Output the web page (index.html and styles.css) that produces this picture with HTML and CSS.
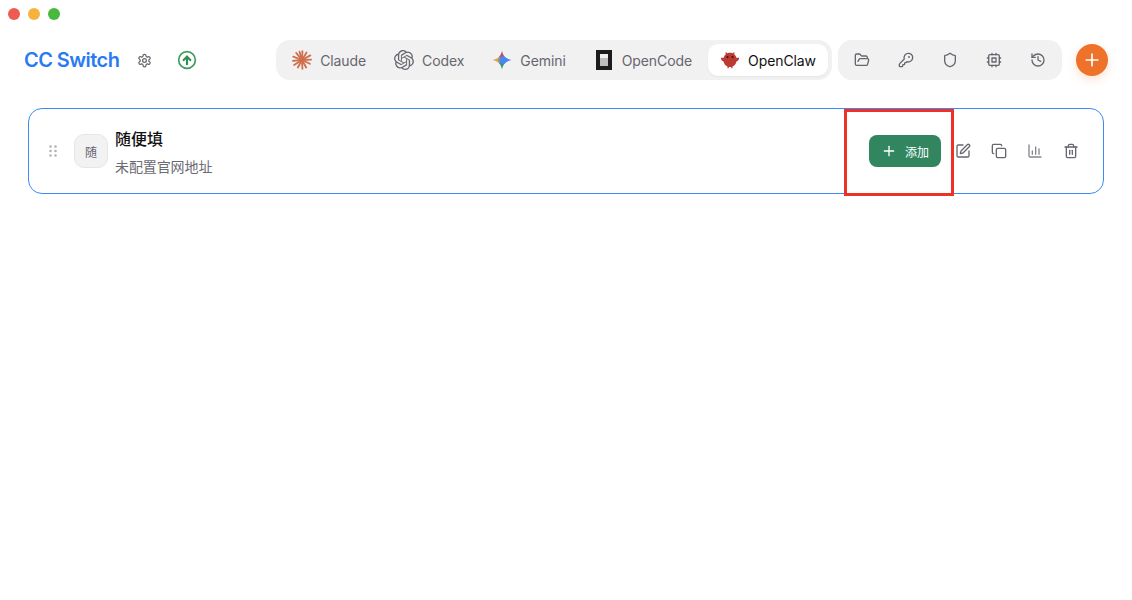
FILE: index.html
```html
<!DOCTYPE html>
<html lang="zh-CN">
<head>
  <meta charset="UTF-8" />
  <meta name="viewport" content="width=device-width, initial-scale=1.0"/>
  <title>CC Switch</title>
  <link rel="stylesheet" href="styles.css">
</head>
<body>
  <div class="titlebar">
    <span class="light red"></span>
    <span class="light yellow"></span>
    <span class="light green"></span>
  </div>

  <header class="topbar">
    <div class="brand">
      <span class="brand-name">CC Switch</span>
      <button class="plain-btn settings-btn" aria-label="settings">
        <svg class="icon" viewBox="0 0 24 24"><path d="M12.22 2h-.44a2 2 0 0 0-2 2v.18a2 2 0 0 1-1 1.73l-.43.25a2 2 0 0 1-2 0l-.15-.08a2 2 0 0 0-2.73.73l-.22.38a2 2 0 0 0 .73 2.73l.15.1a2 2 0 0 1 1 1.72v.51a2 2 0 0 1-1 1.74l-.15.09a2 2 0 0 0-.73 2.73l.22.38a2 2 0 0 0 2.73.73l.15-.08a2 2 0 0 1 2 0l.43.25a2 2 0 0 1 1 1.73V20a2 2 0 0 0 2 2h.44a2 2 0 0 0 2-2v-.18a2 2 0 0 1 1-1.73l.43-.25a2 2 0 0 1 2 0l.15.08a2 2 0 0 0 2.73-.73l.22-.39a2 2 0 0 0-.73-2.73l-.15-.08a2 2 0 0 1-1-1.74v-.5a2 2 0 0 1 1-1.74l.15-.09a2 2 0 0 0 .73-2.73l-.22-.38a2 2 0 0 0-2.73-.73l-.15.08a2 2 0 0 1-2 0l-.43-.25a2 2 0 0 1-1-1.73V4a2 2 0 0 0-2-2z"/><circle cx="12" cy="12" r="3"/></svg>
      </button>
      <button class="plain-btn update-btn" aria-label="update">
        <svg class="icon-update" viewBox="0 0 24 24"><circle cx="12" cy="12" r="10"/><path class="arrow" d="m16 12-4-4-4 4"/><path class="arrow" d="M12 17V8"/></svg>
      </button>
    </div>

    <div class="toolbar">
      <nav class="pill apps">
        <div class="app">
          <svg class="app-icon claude-icon" viewBox="0 0 24 24"><path d="M12 12 12.500 1.500"/><path d="M12 12 17.500 3"/><path d="M12 12 22 6.500"/><path d="M12 12 23 11.500"/><path d="M12 12 21.500 16.500"/><path d="M12 12 17 21"/><path d="M12 12 12.500 22.500"/><path d="M12 12 7 21"/><path d="M12 12 2.500 18"/><path d="M12 12 1 13"/><path d="M12 12 1.500 8"/><path d="M12 12 5 3.500"/><path d="M12 12 9 2"/></svg>
          <span>Claude</span>
        </div>
        <div class="app">
          <svg class="app-icon codex-icon" viewBox="0 0 24 24"><path d="M22.2819 9.8211a5.9847 5.9847 0 0 0-.5157-4.9108 6.0462 6.0462 0 0 0-6.5098-2.9A6.0651 6.0651 0 0 0 4.9807 4.1818a5.9847 5.9847 0 0 0-3.9977 2.9 6.0462 6.0462 0 0 0 .7427 7.0966 5.98 5.98 0 0 0 .511 4.9107 6.051 6.051 0 0 0 6.5146 2.9001A5.9847 5.9847 0 0 0 13.2599 24a6.0557 6.0557 0 0 0 5.7718-4.2058 5.9894 5.9894 0 0 0 3.9977-2.9001 6.0557 6.0557 0 0 0-.7475-7.0729zm-9.022 12.6081a4.4755 4.4755 0 0 1-2.8764-1.0408l.1419-.0804 4.7783-2.7582a.7948.7948 0 0 0 .3927-.6813v-6.7369l2.02 1.1686a.071.071 0 0 1 .038.052v5.5826a4.504 4.504 0 0 1-4.4945 4.4944zm-9.6607-4.1254a4.4708 4.4708 0 0 1-.5346-3.0137l.142.0852 4.783 2.7582a.7712.7712 0 0 0 .7806 0l5.8428-3.3685v2.3324a.0804.0804 0 0 1-.0332.0615L9.74 19.9502a4.4992 4.4992 0 0 1-6.1408-1.6464zM2.3408 7.8956a4.485 4.485 0 0 1 2.3655-1.9728V11.6a.7664.7664 0 0 0 .3879.6765l5.8144 3.3543-2.0201 1.1685a.0757.0757 0 0 1-.071 0l-4.8303-2.7865A4.504 4.504 0 0 1 2.3408 7.872zm16.5963 3.8558L13.1038 8.364 15.1192 7.2a.0757.0757 0 0 1 .071 0l4.8303 2.7913a4.4944 4.4944 0 0 1-.6765 8.1042v-5.6772a.79.79 0 0 0-.407-.667zm2.0107-3.0231l-.142-.0852-4.7735-2.7818a.7759.7759 0 0 0-.7854 0L9.409 9.2297V6.8974a.0662.0662 0 0 1 .0284-.0615l4.8303-2.7866a4.4992 4.4992 0 0 1 6.6802 4.66zM8.3065 12.863l-2.02-1.1638a.0804.0804 0 0 1-.038-.0567V6.0742a4.4992 4.4992 0 0 1 7.3757-3.4537l-.142.0805L8.704 5.459a.7948.7948 0 0 0-.3927.6813zm1.0976-2.3654l2.602-1.4998 2.6069 1.4998v2.9994l-2.5974 1.4997-2.6067-1.4997Z"/></svg>
          <span>Codex</span>
        </div>
        <div class="app">
          <svg class="app-icon" viewBox="0 0 24 24">
            <defs>
              <clipPath id="gemini-star"><path d="M12 0.500C13 7 16.500 10.500 23.500 12 16.500 13.500 13 17 12 23.500 11 17 7.500 13.500 0.500 12 7.500 10.500 11 7 12 0.500Z"/></clipPath>
              <radialGradient id="gemini-core"><stop offset="0.500" stop-color="#4a86f0"/><stop offset="1" stop-color="#4a86f0" stop-opacity="0"/></radialGradient>
            </defs>
            <g clip-path="url(#gemini-star)">
              <path fill="#c9453f" d="M0 0H24L12 12Z"/>
              <path fill="#dda63a" d="M0 0V24L12 12Z"/>
              <path fill="#34945f" d="M0 24H24L12 12Z"/>
              <path fill="#4a86f0" d="M24 0V24L12 12Z"/>
              <circle cx="13.500" cy="12" r="7" fill="url(#gemini-core)"/>
            </g>
          </svg>
          <span>Gemini</span>
        </div>
        <div class="app">
          <svg class="app-icon" viewBox="0 0 20 20"><rect x="2" width="16" height="20" fill="#1c1c1c"/><rect x="6" y="4" width="8" height="12" fill="#f0f0f0"/><rect x="6" y="8" width="8" height="8" fill="#bdbdbd"/></svg>
          <span>OpenCode</span>
        </div>
        <div class="app active">
          <svg class="app-icon" viewBox="0 0 24 24"><path fill="#bd3a33" d="M7 5 6.500 2.500 9 3.800C10.900 3.200 13.100 3.200 15 3.800L17.500 2.500 17 5C18.500 6.200 19.400 7.700 19.700 9.500 20.800 9.300 22 9.600 23 9.300 23 11.500 21.500 13.400 19.700 13.800 19.200 16.800 17.300 19 15 19.800V22H13.500V20.300H10.500V22H9V19.800C6.700 19 4.800 16.800 4.300 13.800 2.500 13.400 1 11.500 1 9.300 2 9.600 3.200 9.300 4.300 9.500 4.600 7.700 5.500 6.200 7 5Z"/><circle cx="9" cy="8.500" r="1.300" fill="#3a1a1a"/><circle cx="15" cy="8.500" r="1.300" fill="#3a1a1a"/></svg>
          <span>OpenClaw</span>
        </div>
      </nav>

      <div class="pill tools">
        <button class="plain-btn tool-btn" aria-label="folder">
          <svg class="icon" viewBox="0 0 24 24"><path d="m6 14 1.500-2.900A2 2 0 0 1 9.240 10H20a2 2 0 0 1 1.940 2.500l-1.540 6a2 2 0 0 1-1.950 1.500H4a2 2 0 0 1-2-2V5a2 2 0 0 1 2-2h3.900a2 2 0 0 1 1.690.9l.81 1.200a2 2 0 0 0 1.670.9H18a2 2 0 0 1 2 2v2"/></svg>
        </button>
        <button class="plain-btn tool-btn" aria-label="key">
          <svg class="icon" viewBox="0 0 24 24"><path d="M2.586 17.414A2 2 0 0 0 2 18.828V21a1 1 0 0 0 1 1h3a1 1 0 0 0 1-1v-1a1 1 0 0 1 1-1h1a1 1 0 0 0 1-1v-1a1 1 0 0 1 1-1h.172a2 2 0 0 0 1.414-.586l.814-.814a6.500 6.500 0 1 0-4-4z"/><circle cx="16.500" cy="7.500" r=".5"/></svg>
        </button>
        <button class="plain-btn tool-btn" aria-label="shield">
          <svg class="icon" viewBox="0 0 24 24"><path d="M20 13c0 5-3.500 7.500-7.660 8.950a1 1 0 0 1-.67-.01C7.500 20.500 4 18 4 13V6a1 1 0 0 1 1-1c2 0 4.500-1.200 6.240-2.720a1.170 1.170 0 0 1 1.520 0C14.510 3.810 17 5 19 5a1 1 0 0 1 1 1z"/></svg>
        </button>
        <button class="plain-btn tool-btn" aria-label="cpu">
          <svg class="icon" viewBox="0 0 24 24"><rect x="4" y="4" width="16" height="16" rx="2"/><rect x="9" y="9" width="6" height="6"/><path d="M15 2v2M15 20v2M2 15h2M2 9h2M20 15h2M20 9h2M9 2v2M9 20v2"/></svg>
        </button>
        <button class="plain-btn tool-btn" aria-label="history">
          <svg class="icon" viewBox="0 0 24 24"><path d="M3 12a9 9 0 1 0 9-9 9.750 9.750 0 0 0-6.740 2.740L3 8"/><path d="M3 3v5h5"/><path d="M12 7v5l4 2"/></svg>
        </button>
      </div>

      <button class="plain-btn add-btn" aria-label="add">
        <svg viewBox="0 0 24 24"><path d="M5 12h14"/><path d="M12 5v14"/></svg>
      </button>
    </div>
  </header>

  <main class="content">
    <section class="card">
      <div class="card-left">
        <svg class="grip" viewBox="0 0 8 12"><circle cx="1.500" cy="1.500" r="1.300"/><circle cx="6.500" cy="1.500" r="1.300"/><circle cx="1.500" cy="6" r="1.300"/><circle cx="6.500" cy="6" r="1.300"/><circle cx="1.500" cy="10.500" r="1.300"/><circle cx="6.500" cy="10.500" r="1.300"/></svg>
        <div class="avatar">随</div>
        <div class="card-text">
          <div class="card-title">随便填</div>
          <div class="card-sub">未配置官网地址</div>
        </div>
      </div>
      <div class="card-actions">
        <button class="primary-btn">
          <svg viewBox="0 0 24 24"><path d="M5 12h14"/><path d="M12 5v14"/></svg>
          <span>添加</span>
        </button>
        <button class="plain-btn action-btn" aria-label="edit">
          <svg class="icon" viewBox="0 0 24 24"><path d="M12 3H5a2 2 0 0 0-2 2v14a2 2 0 0 0 2 2h14a2 2 0 0 0 2-2v-7"/><path d="M18.375 2.625a1 1 0 0 1 3 3l-9.013 9.014a2 2 0 0 1-.853.505l-2.873.84a.500.500 0 0 1-.62-.62l.84-2.873a2 2 0 0 1 .506-.852z"/></svg>
        </button>
        <button class="plain-btn action-btn" aria-label="copy">
          <svg class="icon" viewBox="0 0 24 24"><rect x="8" y="8" width="14" height="14" rx="2"/><path d="M4 16c-1.100 0-2-.9-2-2V4c0-1.100.9-2 2-2h10c1.100 0 2 .9 2 2"/></svg>
        </button>
        <button class="plain-btn action-btn" aria-label="stats">
          <svg class="icon icon-light" viewBox="0 0 24 24"><path d="M3 3v16a2 2 0 0 0 2 2h16"/><path d="M8 17v-5"/><path d="M13 17V6"/><path d="M18 17v-8"/></svg>
        </button>
        <button class="plain-btn action-btn" aria-label="delete">
          <svg class="icon" viewBox="0 0 24 24"><path d="M3 6h18"/><path d="M19 6v14c0 1-1 2-2 2H7c-1 0-2-1-2-2V6"/><path d="M8 6V4c0-1 1-2 2-2h4c1 0 2 1 2 2v2"/><path d="M10 11v6"/><path d="M14 11v6"/></svg>
        </button>
      </div>
    </section>
    <div class="callout"></div>
  </main>
</body>
</html>
```

FILE: styles.css
```css
* {
  box-sizing: border-box;
}

html, body {
  height: 100%;
}

body {
  margin: 0;
  background: #fff;
  font-family: Inter, "Noto Sans CJK SC", sans-serif;
  color: #111;
}

button {
  font-family: inherit;
}

.titlebar {
  display: flex;
  gap: 8px;
  height: 28px;
  padding: 8px 8px 0;
}

.light {
  width: 12px;
  height: 12px;
  border-radius: 50%;
}

.light.red { background: #ee5b50; }
.light.yellow { background: #f6b33c; }
.light.green { background: #48b83f; }

.topbar {
  display: flex;
  justify-content: space-between;
  align-items: center;
  height: 64px;
  padding: 0 24px;
}

.brand {
  display: flex;
  align-items: center;
}

.brand-name {
  font-size: 20px;
  font-weight: 600;
  color: #2a7bf3;
  letter-spacing: -0.55px;
  margin-right: 9px;
}

.plain-btn {
  display: flex;
  align-items: center;
  justify-content: center;
  padding: 0;
  border: none;
  background: none;
}

.icon {
  width: 16px;
  height: 16px;
  fill: none;
  stroke: #66666e;
  stroke-width: 2;
  stroke-linecap: round;
  stroke-linejoin: round;
}

.icon-light {
  stroke: #85858b;
}

.settings-btn {
  width: 32px;
  height: 32px;
}

.settings-btn .icon {
  width: 15px;
  height: 15px;
}

.update-btn {
  width: 32px;
  height: 32px;
  margin-left: 11px;
}

.icon-update {
  width: 20px;
  height: 20px;
  fill: none;
  stroke: #3f9b60;
  stroke-width: 2;
  stroke-linecap: round;
  stroke-linejoin: round;
}

.icon-update .arrow {
  stroke: #2f8f52;
  stroke-width: 2.600;
}

.toolbar {
  display: flex;
  align-items: center;
}

.pill {
  display: flex;
  align-items: center;
  height: 40px;
  background: #f1f1f2;
  border-radius: 14px;
}

.apps {
  gap: 4px;
  margin-right: 6px;
  padding: 4px;
}

.tools {
  padding: 0 2px;
}

.app {
  display: flex;
  align-items: center;
  gap: 8px;
  height: 32px;
  padding: 0 12px;
  border-radius: 10px;
  font-size: 14px;
  font-weight: 400;
  letter-spacing: -0.09px;
  color: #66666e;
}

.app.active {
  background: #fff;
  color: #111;
  box-shadow: 0 1px 2px rgba(0, 0, 0, 0.05);
}

.app-icon {
  width: 20px;
  height: 20px;
  flex-shrink: 0;
}

.claude-icon {
  fill: none;
  stroke: #cf6f4e;
  stroke-width: 2.200;
  stroke-linecap: round;
}

.codex-icon {
  fill: #66666e;
}

.tool-btn {
  width: 44px;
  height: 32px;
}

.add-btn {
  width: 32px;
  height: 32px;
  margin-left: 14px;
  border-radius: 50%;
  background: #ef722a;
  box-shadow: 0 4px 10px rgba(240, 114, 42, 0.2);
}

.add-btn svg {
  width: 20px;
  height: 20px;
  fill: none;
  stroke: #fff;
  stroke-width: 2;
  stroke-linecap: round;
}

.content {
  position: relative;
  min-height: 508px;
  padding: 16px 28px 0;
}

.card {
  display: flex;
  justify-content: space-between;
  align-items: center;
  height: 86px;
  padding: 0 16px;
  border: 1px solid #3b8af5;
  border-radius: 14px;
}

.card-left {
  display: flex;
  align-items: center;
}

.grip {
  width: 8px;
  height: 12px;
  margin-left: 4px;
  fill: #b4b4b8;
}

.avatar {
  display: flex;
  align-items: center;
  justify-content: center;
  width: 34px;
  height: 34px;
  margin-left: 17px;
  background: #f2f2f3;
  border: 1px solid #e6e6e8;
  border-radius: 10px;
  font-size: 12px;
  color: #66666e;
}

.card-text {
  margin-left: 7px;
  padding-top: 2px;
}

.card-title {
  font-size: 16px;
  font-weight: 500;
  line-height: 24px;
  color: #111;
}

.card-sub {
  margin-top: 6px;
  font-size: 14px;
  line-height: 20px;
  letter-spacing: -0.1px;
  color: #6b6b72;
}

.card-actions {
  display: flex;
  align-items: center;
  gap: 4px;
}

.primary-btn {
  display: flex;
  align-items: center;
  justify-content: center;
  gap: 8px;
  width: 72px;
  height: 32px;
  margin-right: 2px;
  padding: 0;
  border: none;
  border-radius: 8px;
  background: #32865f;
  color: #fff;
  font-size: 12px;
}

.primary-btn svg {
  width: 16px;
  height: 16px;
  fill: none;
  stroke: #fff;
  stroke-width: 2;
  stroke-linecap: round;
}

.action-btn {
  width: 32px;
  height: 32px;
}

.callout {
  position: absolute;
  top: 17px;
  left: 844px;
  z-index: 2;
  width: 110px;
  height: 87px;
  border: 3px solid #ee3124;
  pointer-events: none;
}
```
